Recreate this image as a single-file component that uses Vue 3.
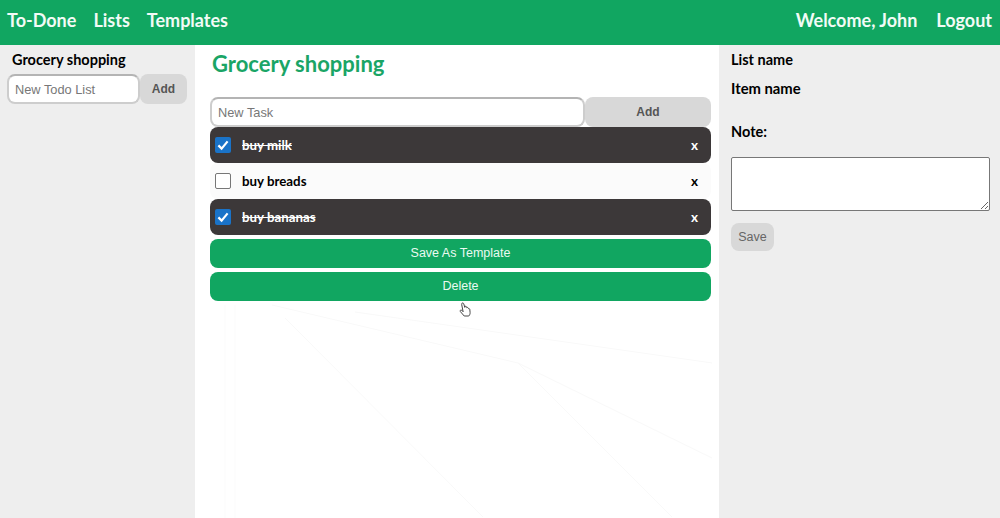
<script setup>
const tasks = [
  { name: 'buy milk', done: true },
  { name: 'buy breads', done: false },
  { name: 'buy bananas', done: true },
]
</script>

<template>
  <div class="page">
    <header class="topbar">
      <nav class="nav">
        <a>To-Done</a>
        <a>Lists</a>
        <a>Templates</a>
      </nav>
      <nav class="nav right">
        <a>Welcome, John</a>
        <a>Logout</a>
      </nav>
    </header>
    <div class="columns">
      <aside class="left">
        <div class="list-title">Grocery shopping</div>
        <div class="left-form">
          <input class="field" placeholder="New Todo List" />
          <button class="grey-btn">Add</button>
        </div>
      </aside>
      <main class="middle">
        <svg class="streaks" viewBox="0 0 524 473" width="524" height="473">
          <g fill="none" stroke="#f9f9f9" stroke-width="1">
            <path d="M90 273 288 472" />
            <path d="M77 260 323 318 517 413" />
            <path d="M323 318 477 472" />
            <path d="M160 267 517 318" />
          </g>
          <path d="M30 260V473M40 260V473" fill="none" stroke="#fbfbfb" stroke-width="1" />
        </svg>
        <h1>Grocery shopping</h1>
        <div class="task-form">
          <input class="field task-field" placeholder="New Task" />
          <button class="grey-btn task-add">Add</button>
        </div>
        <div v-for="t in tasks" :key="t.name" class="task" :class="{ done: t.done }">
          <span class="box">
            <svg v-if="t.done" viewBox="0 0 16 16" width="16" height="16">
              <path d="M3.4 8.4 6.6 11.6 12.6 4.4" fill="none" stroke="#fff" stroke-width="2.2" />
            </svg>
          </span>
          <span class="task-name">{{ t.name }}</span>
          <span class="remove">x</span>
        </div>
        <button class="green-btn first">Save As Template</button>
        <button class="green-btn">Delete</button>
        <svg class="cursor" viewBox="0 0 14 16" width="14" height="16">
          <path d="M4 1.2c.8-.6 1.6 0 1.8.8l1 3.4.3-1c.7-.4 1.3 0 1.5.6l.2.7c.6-.5 1.3-.2 1.5.4l.2.6c.6-.3 1.2 0 1.3.7l.3 3.2c.1 1.4-.6 2.6-1.3 3.4H6.2L2.4 9.6c-.5-.6-.3-1.2.2-1.4.5-.2 1.1 0 1.6.5l.9 1L3.7 2.6c-.1-.5 0-1 .3-1.4Z" fill="#fff" stroke="#333" stroke-width=".9" stroke-linejoin="round" />
        </svg>
      </main>
      <aside class="side">
        <div class="label">List name</div>
        <div class="label item">Item name</div>
        <div class="label note">Note:</div>
        <textarea class="note-box"></textarea>
        <button class="grey-btn save">Save</button>
      </aside>
    </div>
  </div>
</template>

<style>
html, body { margin: 0; background: #eee; }
</style>

<style scoped>
.page {
  width: 1000px;
  height: 518px;
  display: flex;
  flex-direction: column;
  overflow: hidden;
  font-family: Lato, "Liberation Sans", sans-serif;
  font-weight: 700;
  color: #000;
}
.topbar {
  height: 45px;
  flex: none;
  background: #11a661;
  display: flex;
  justify-content: space-between;
  align-items: center;
  padding: 0 8px 6px 7px;
  box-sizing: border-box;
  color: #f2fbf6;
  font-size: 18px;
}
.nav { display: flex; gap: 17px; }
.nav.right { gap: 19px; }
.columns { flex: 1; display: grid; grid-template-columns: 195px 524px 281px; min-height: 0; }
.left { background: #eee; padding: 6px 8px 0 7px; }
.list-title { font-size: 14.5px; line-height: 18px; padding-left: 5px; }
.left-form { display: flex; margin-top: 5px; }
.field {
  box-sizing: border-box;
  border: 2px solid #cdcdcd;
  border-top-color: #b4b4b4;
  border-radius: 8px;
  background: #fff;
  font: 400 12.8px "Liberation Sans", sans-serif;
  padding: 0 6px;
  width: 133px;
  height: 30px;
  outline: none;
}
.field::placeholder { color: #777; opacity: 1; }
.grey-btn {
  border: 0;
  background: #d8d8d8;
  border-radius: 8px;
  color: #555;
  font: 700 12px "Liberation Sans", sans-serif;
  width: 47px;
  height: 30px;
  padding: 0;
}
.middle { position: relative; background: #fff; padding: 0 8px 0 15px; }
.streaks { position: absolute; left: 0; top: 0; }
h1 {
  position: relative;
  margin: 5px 0 0 2px;
  font-size: 22px;
  line-height: 28px;
  font-weight: 700;
  color: #1aa566;
}
.task-form { position: relative; display: flex; margin-top: 19px; }
.task-field { width: 375px; }
.task-add { width: 126px; }
.task {
  position: relative;
  height: 36px;
  display: flex;
  align-items: center;
  border-radius: 8px;
  padding: 0 13px 0 5px;
  font-size: 13.3px;
  background: #fbfbfb;
}
.task.done { background: #3c3839; color: #fff; }
.task.done .task-name { text-decoration: line-through; }
.box {
  width: 16px;
  height: 16px;
  box-sizing: border-box;
  border: 1px solid #777;
  border-radius: 2px;
  background: #fff;
  margin-right: 11px;
  display: flex;
}
.task.done .box { background: #1a73c8; border: 0; }
.task-name { flex: 1; }
.remove { font-size: 13.5px; }
.green-btn {
  position: relative;
  display: block;
  width: 100%;
  height: 29px;
  margin-top: 4px;
  padding: 0 0 1px;
  border: 0;
  border-radius: 8px;
  background: #11a661;
  color: #eafaf1;
  font: 400 12.5px "Liberation Sans", sans-serif;
}
.cursor { position: absolute; left: 263px; top: 257px; }
.side { background: #eee; padding: 6px 10px 0 12px; display: flex; flex-direction: column; align-items: flex-start; }
.label { font-size: 14.5px; line-height: 18px; }
.item { margin-top: 10px; font-size: 14.8px; }
.note { margin-top: 26px; }
.note-box {
  box-sizing: border-box;
  width: 259px;
  height: 54px;
  margin-top: 16px;
  border: 1px solid #777;
  border-radius: 2px;
  background: #fff;
  outline: none;
}
.save { margin-top: 12px; width: 43px; height: 28px; font-weight: 400; color: #666; font-size: 12.5px; }
</style>
